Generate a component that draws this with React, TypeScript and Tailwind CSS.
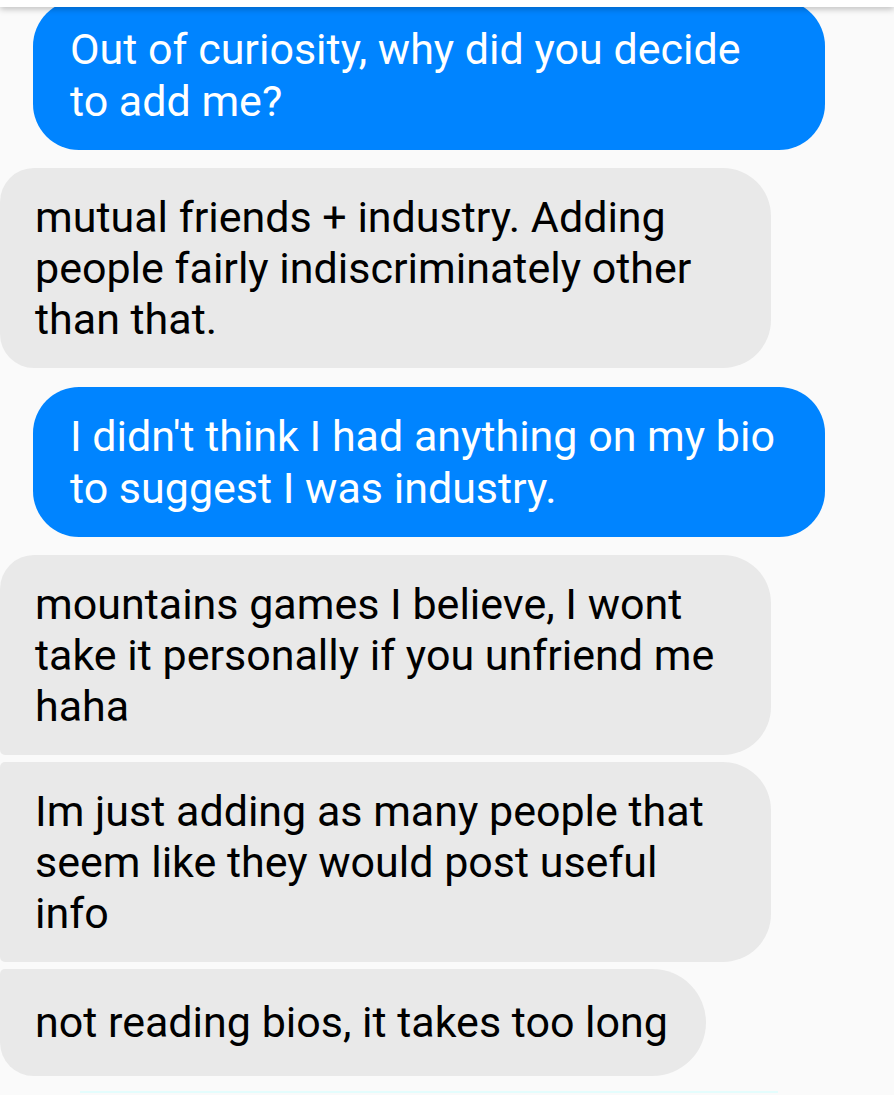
import React from "react";

const font = { fontFamily: "Roboto, 'Liberation Sans', sans-serif" };

const Lines = ({ lines }: { lines: string[] }) => (
  <>
    {lines.map((l, i) => (
      <div key={i} className="whitespace-nowrap">
        {l}
      </div>
    ))}
  </>
);

const Sent = ({ lines }: { lines: string[] }) => {
  return (
    <div className="ml-[33px] w-[792px] rounded-[46px] bg-[#0084ff] py-[23px] pl-[37px] pr-[40px] text-[43px] leading-[52px] text-white">
      <Lines lines={lines} />
    </div>
  );
};

const Received = ({
  lines,
  corners,
  narrow,
}: {
  lines: string[];
  corners: string;
  narrow?: boolean;
}) => {
  return (
    <div
      className={
        "bg-[#e9e9e9] pl-[35px] text-[43px] leading-[51px] text-black " +
        corners +
        (narrow ? " w-fit py-[28px] pr-[38px]" : " w-[771px] pt-[24px] pb-[23px] pr-[40px]")
      }
    >
      <Lines lines={lines} />
    </div>
  );
};

export default function App() {
  return (
    <div className="relative h-[1095px] w-[894px] overflow-hidden bg-[#fafafa]" style={font}>
      <div className="absolute left-0 right-0 top-0 z-10 h-[7px] bg-white shadow-[0_2px_6px_rgba(0,0,0,0.25)]" />
      <div className="flex flex-col">
        <Sent lines={["Out of curiosity, why did you decide", "to add me?"]} />
        <div className="mt-[18px]">
          <Received
            lines={["mutual friends + industry. Adding", "people fairly indiscriminately other", "than that."]}
            corners="rounded-tl-[34px] rounded-bl-[34px] rounded-r-[48px]"
          />
        </div>
        <div className="mt-[19px]">
          <Sent lines={["I didn't think I had anything on my bio", "to suggest I was industry."]} />
        </div>
        <div className="mt-[18px]">
          <Received
            lines={["mountains games I believe, I wont", "take it personally if you unfriend me", "haha"]}
            corners="rounded-tl-[34px] rounded-bl-[5px] rounded-r-[48px]"
          />
        </div>
        <div className="mt-[7px]">
          <Received
            lines={["Im just adding as many people that", "seem like they would post useful", "info"]}
            corners="rounded-l-[5px] rounded-r-[48px]"
          />
        </div>
        <div className="mt-[7px]">
          <Received
            lines={["not reading bios, it takes too long"]}
            corners="rounded-tl-[5px] rounded-bl-[34px] rounded-r-[54px]"
            narrow
          />
        </div>
        <div className="ml-[80px] mt-[15px] h-[2px] w-[698px] bg-[#e4fdfd]" />
      </div>
    </div>
  );
}
